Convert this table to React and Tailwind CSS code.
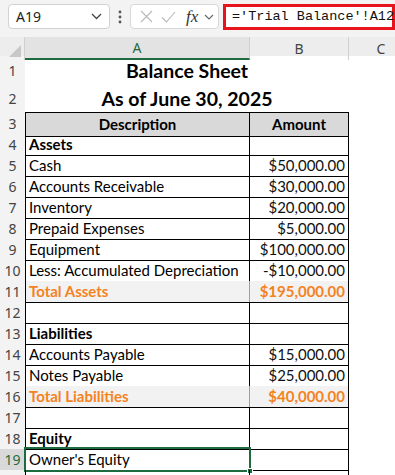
import React from "react";

const sheetFont = { fontFamily: "Lato, 'Liberation Sans', sans-serif" };

const rows = [
  { n: 4, a: "Assets", kind: "bold" },
  { n: 5, a: "Cash", b: "$50,000.00" },
  { n: 6, a: "Accounts Receivable", b: "$30,000.00" },
  { n: 7, a: "Inventory", b: "$20,000.00" },
  { n: 8, a: "Prepaid Expenses", b: "$5,000.00" },
  { n: 9, a: "Equipment", b: "$100,000.00" },
  { n: 10, a: "Less: Accumulated Depreciation", b: "-$10,000.00" },
  { n: 11, a: "Total Assets", b: "$195,000.00", kind: "total" },
  { n: 12, a: "" },
  { n: 13, a: "Liabilities", kind: "bold" },
  { n: 14, a: "Accounts Payable", b: "$15,000.00" },
  { n: 15, a: "Notes Payable", b: "$25,000.00" },
  { n: 16, a: "Total Liabilities", b: "$40,000.00", kind: "total" },
  { n: 17, a: "" },
  { n: 18, a: "Equity", kind: "bold" },
  { n: 19, a: "Owner's Equity", selected: true },
  { n: "", a: "" },
];

function RowHeader({ n, selected, className = "" }) {
  return (
    <div
      className={
        "flex items-center justify-center border-b border-[#d6d6d6] text-[14px] " +
        (selected ? "bg-[#d9d9d9] text-[#1e6b3f] " : "bg-[#f3f3f3] text-[#444] ") +
        className
      }
      style={{ fontFamily: "'Noto Sans', 'Liberation Sans', sans-serif" }}
    >
      {n}
    </div>
  );
}

function DataRow({ r }) {
  const total = r.kind === "total";
  const bold = r.kind === "bold";
  return (
    <div className="grid grid-cols-[25px_225px_99px_1fr] h-[21px]">
      <RowHeader n={r.n} selected={r.selected} />
      <div
        className={
          "relative flex items-center pl-[3px] border-l border-b border-r border-black text-[15px] leading-none " +
          (total ? "bg-[#f2f2f2] border-r-[#a0a0a0] text-[#f5821f] font-bold " : "text-black ") +
          (bold ? "font-bold " : "")
        }
        style={sheetFont}
      >
        <span className="whitespace-nowrap">{r.a}</span>
        {r.selected && (
          <div className="absolute -left-[2px] -top-[2px] -right-[2px] -bottom-[2px] border-2 border-[#1e6b3f] pointer-events-none">
            <div className="absolute -right-[4px] -bottom-[4px] w-[6px] h-[6px] bg-[#1e6b3f] border border-white" />
          </div>
        )}
      </div>
      <div
        className={
          "flex items-center justify-end pr-[3px] border-b border-r border-black text-[15px] leading-none " +
          (total ? "bg-[#f2f2f2] text-[#f5821f] font-bold" : "text-[#111]")
        }
        style={sheetFont}
      >
        {r.b || ""}
      </div>
      <div className="bg-white" />
    </div>
  );
}

export default function App() {
  return (
    <div className="w-[395px] h-[475px] overflow-hidden bg-white select-none">
      {/* Formula bar */}
      <div className="h-[37px] bg-[#f3f3f3] flex items-start pt-[4px]">
        <div
          className="ml-[8px] w-[102px] h-[25px] rounded-[4px] border border-[#d2d2d2] bg-white flex items-center justify-between pl-[7px] pr-[7px] text-[14px] text-[#222]"
          style={{ fontFamily: "'Noto Sans', 'Liberation Sans', sans-serif" }}
        >
          <span>A19</span>
          <svg width="11" height="7" viewBox="0 0 11 7" fill="none">
            <path d="M1 1l4.5 4.5L10 1" stroke="#444" strokeWidth="1.3" />
          </svg>
        </div>
        <div className="w-[20px] h-[25px] flex items-center justify-center">
          <svg width="4" height="14" viewBox="0 0 4 14">
            <circle cx="2" cy="2" r="1.4" fill="#555" />
            <circle cx="2" cy="7" r="1.4" fill="#555" />
            <circle cx="2" cy="12" r="1.4" fill="#555" />
          </svg>
        </div>
        <div className="w-[89px] h-[25px] rounded-[4px] border border-[#d8d8d8] bg-white flex items-center pl-[9px] gap-[8px]">
          <svg width="13" height="13" viewBox="0 0 13 13" fill="none">
            <path d="M1 1l11 11M12 1L1 12" stroke="#b8b8b8" strokeWidth="1.1" />
          </svg>
          <svg width="15" height="12" viewBox="0 0 15 12" fill="none">
            <path d="M1 6.5l4.5 4.5L14 1" stroke="#b8b8b8" strokeWidth="1.1" />
          </svg>
          <span
            className="italic text-[17px] leading-none text-[#333] ml-[2px]"
            style={{ fontFamily: "'Liberation Serif', 'DejaVu Serif', serif" }}
          >
            fx
          </span>
          <svg width="10" height="6" viewBox="0 0 10 6" fill="none" className="-ml-[2px]">
            <path d="M1 1l4 4 4-4" stroke="#666" strokeWidth="1.1" />
          </svg>
        </div>
        <div className="ml-[4px] w-[172px] h-[26px] border-[3px] border-[#e8141b] bg-white flex items-center pl-[6px]">
          <span
            className="text-[13.5px] text-[#111] whitespace-nowrap"
            style={{ fontFamily: "'Liberation Mono', 'DejaVu Sans Mono', monospace" }}
          >
            ='Trial Balance'!A12
          </span>
        </div>
      </div>

      {/* Column headers */}
      <div
        className="grid grid-cols-[25px_225px_99px_1fr] h-[19px] bg-[#ededed] text-[14px]"
        style={{ fontFamily: "'Noto Sans', 'Liberation Sans', sans-serif" }}
      >
        <div className="relative border-r border-[#d0d0d0]">
          <svg width="12" height="12" viewBox="0 0 12 12" className="absolute right-[3px] bottom-[3px]">
            <path d="M12 0V12H0Z" fill="#c8c8c8" />
          </svg>
        </div>
        <div className="flex items-center justify-center border-b-2 border-[#1e6b3f] text-[#1e6b3f] border-r border-r-[#d0d0d0] bg-[#e3e3e3]">
          A
        </div>
        <div className="flex items-center justify-center border-r border-[#d0d0d0] text-[#444]">B</div>
        <div className="flex items-center justify-center text-[#444] w-[64px]">C</div>
      </div>

      {/* Title rows */}
      <div className="grid grid-cols-[25px_1fr] h-[28px]">
        <RowHeader n={1} />
        <div className="w-[324px] flex items-center justify-center font-bold text-[19.5px]" style={sheetFont}>
          Balance Sheet
        </div>
      </div>
      <div className="grid grid-cols-[25px_1fr] h-[28px]">
        <RowHeader n={2} />
        <div className="w-[324px] flex items-center justify-center font-bold text-[19.5px]" style={sheetFont}>
          As of June 30, 2025
        </div>
      </div>

      {/* Header row 3 */}
      <div className="grid grid-cols-[25px_225px_99px_1fr] h-[22px]">
        <RowHeader n={3} />
        <div
          className="flex items-center justify-center border border-black bg-[#d9d9d9] font-bold text-[15px]"
          style={sheetFont}
        >
          Description
        </div>
        <div
          className="flex items-center justify-center border-t border-b border-r border-black bg-[#d9d9d9] font-bold text-[15px]"
          style={sheetFont}
        >
          Amount
        </div>
        <div />
      </div>

      {rows.map((r, i) => (
        <DataRow key={i} r={r} />
      ))}
    </div>
  );
}
